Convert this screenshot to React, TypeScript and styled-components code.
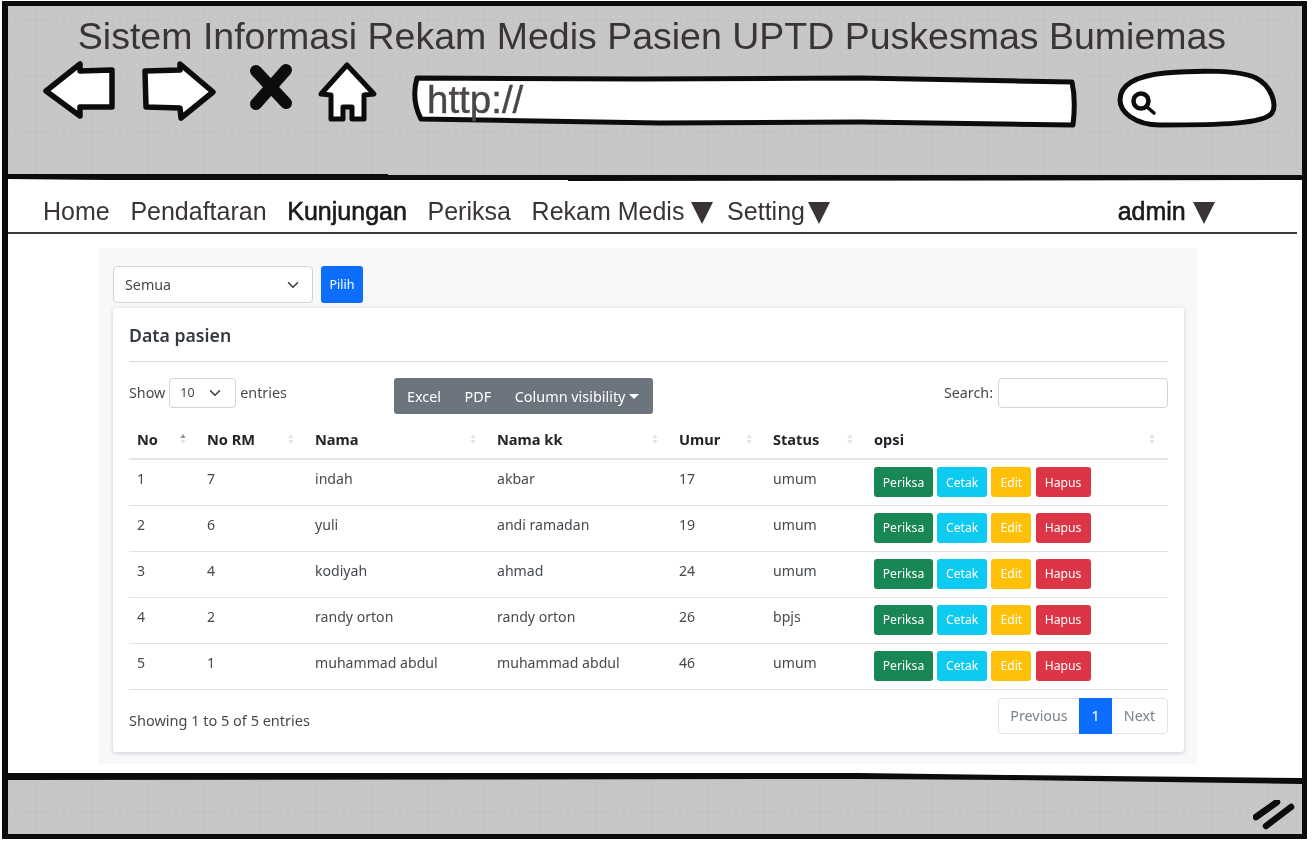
import styled, { createGlobalStyle } from 'styled-components'

const GlobalStyle = createGlobalStyle`
  html, body {
    margin: 0;
    padding: 0;
    background: #fff;
  }
  * {
    box-sizing: border-box;
  }
`

const barGray = '#c6c6c6'

const sketchGray = `
  background-color: ${barGray};
  background-image: radial-gradient(circle, #cbcbcb 1px, transparent 1.4px);
  background-size: 7px 7px;
`

const uiFont = `"Noto Sans", "Open Sans", sans-serif`
const sketchFont = `"Liberation Sans", Arial, sans-serif`

const Frame = styled.div`
  width: 1305px;
  height: 838px;
  margin: 1px 0 0 2px;
  border: 5px solid #0c0c0c;
  border-left-width: 6px;
  display: flex;
  flex-direction: column;
  background: #fff;
  overflow: hidden;
  filter: blur(0.4px);
`

const BrowserBar = styled.header`
  ${sketchGray}
  height: 167px;
  flex: none;
`

const Title = styled.h1`
  margin: 0;
  padding: 12px 6px 0 0;
  height: 52px;
  font-family: ${sketchFont};
  font-size: 37.5px;
  line-height: 36px;
  font-weight: 400;
  color: #3a3534;
  text-align: center;
  white-space: nowrap;
`

const Toolbar = styled.div`
  display: flex;
  align-items: flex-start;
  padding-left: 33px;
`

const ToolIcon = styled.svg<{ $ml?: number }>`
  flex: none;
  height: 72px;
  margin-left: ${({ $ml }) => $ml ?? 0}px;
`

const UrlBar = styled.div`
  position: relative;
  flex: none;
  width: 672px;
  height: 72px;
  margin-left: 30px;
`

const UrlShape = styled.svg`
  position: absolute;
  inset: 0;
  width: 100%;
  height: 100%;
`

const UrlText = styled.span`
  position: absolute;
  left: 17px;
  top: 21px;
  font-family: ${sketchFont};
  font-size: 38.5px;
  line-height: 42px;
  color: #4a4644;
  -webkit-text-stroke: 0.4px #4a4644;
`

const SketchLine = styled.svg<{ $height: number; $above: string; $below: string; $mt?: number }>`
  display: block;
  flex: none;
  width: 100%;
  height: ${({ $height }) => $height}px;
  margin-top: ${({ $mt }) => $mt ?? 0}px;
  background: linear-gradient(
    ${({ $above }) => $above} 50%,
    ${({ $below }) => $below} 50%
  );
`

const Nav = styled.nav`
  flex: none;
  height: 52px;
  margin-right: 5px;
  padding: 14px 0 0 35px;
  border-bottom: 2px solid #3f3b3a;
  display: flex;
  align-items: flex-start;
  gap: 20.7px;
  font-family: ${sketchFont};
  font-size: 25px;
  line-height: 30px;
  color: #3a3534;
`

const NavItem = styled.span<{ $active?: boolean }>`
  display: flex;
  align-items: center;
  white-space: nowrap;
  ${({ $active }) => $active && '-webkit-text-stroke: 0.6px #1c1a1a; color: #1c1a1a;'}
`

const AdminItem = styled(NavItem)`
  margin-left: 267px;
`

const Caret = styled.i<{ $gap: number; $trail?: number }>`
  display: block;
  width: 0;
  height: 0;
  margin: 3px ${({ $trail }) => $trail ?? 0}px 0 ${({ $gap }) => $gap}px;
  border-left: 11px solid transparent;
  border-right: 11px solid transparent;
  border-top: 22px solid #3a3534;
`

const Panel = styled.main`
  flex: none;
  width: 1099px;
  height: 516px;
  margin: 14px 0 0 90px;
  padding: 18px 12px 0 15px;
  background: #f7f8fa;
  font-family: ${uiFont};
  font-size: 14.3px;
  color: #212529;
`

const FilterRow = styled.form`
  display: flex;
  gap: 8px;
  height: 37px;
`

const SelectBox = styled.div`
  width: 200px;
  display: flex;
  align-items: center;
  justify-content: space-between;
  padding: 0 13px 0 11px;
  background: #fff;
  border: 1px solid #ced4da;
  border-radius: 4px;
  font-size: 14.3px;
  color: #454a4f;
`

const Chevron = styled.svg`
  flex: none;
  width: 12px;
  height: 12px;
`

const PrimaryButton = styled.button`
  width: 42px;
  padding: 0;
  border: 0;
  border-radius: 3px;
  background: #0d6efd;
  color: #fff;
  font-family: ${uiFont};
  font-size: 12.5px;
`

const Card = styled.section`
  width: 1071px;
  height: 444px;
  margin-top: 5px;
  padding: 0 16px;
  background: #fff;
  border-radius: 3px;
  box-shadow: 0 1px 4px rgba(40, 50, 60, 0.22);
`

const CardTitle = styled.h2`
  margin: 0;
  height: 54px;
  padding-top: 14px;
  font-size: 17.7px;
  line-height: 26px;
  font-weight: 600;
  color: #343a40;
  border-bottom: 1px solid #d8dadc;
`

const ControlRow = styled.div`
  display: flex;
  align-items: flex-start;
  margin-top: 16px;
  height: 44px;
  font-size: 14.3px;
  color: #454a4f;
`

const LengthControl = styled.label`
  width: 265px;
  display: flex;
  align-items: center;
  height: 30px;
  gap: 4px;
  line-height: 28px;
`

const LengthSelect = styled.div`
  width: 67px;
  height: 30px;
  display: flex;
  align-items: center;
  justify-content: space-between;
  padding: 0 14px 0 10px;
  border: 1px solid #ced4da;
  border-radius: 4px;
  font-size: 12.5px;
`

const ButtonGroup = styled.div`
  width: 259px;
  height: 36px;
  display: flex;
  align-items: center;
  padding-left: 13px;
  gap: 23.5px;
  background: #6c757d;
  border-radius: 3px;
  color: #fff;
  font-size: 14.4px;
`

const DropdownLabel = styled.span`
  display: flex;
  align-items: center;
  gap: 4px;
  &::after {
    content: '';
    border-left: 5px solid transparent;
    border-right: 5px solid transparent;
    border-top: 5px solid #fff;
  }
`

const SearchControl = styled.label`
  margin-left: auto;
  height: 30px;
  display: flex;
  align-items: flex-start;
  gap: 5px;
  line-height: 29px;
`

const SearchInput = styled.input`
  width: 170px;
  height: 30px;
  border: 1px solid #ced4da;
  border-radius: 4px;
  background: #fff;
`

const Table = styled.table`
  width: 1039px;
  table-layout: fixed;
  border-collapse: collapse;
  font-size: 14.1px;
  color: #454a4f;
`

const HeadCell = styled.th<{ $w: number }>`
  width: ${({ $w }) => $w}px;
  height: 37px;
  padding: 0 8px 2px;
  text-align: left;
  font-size: 14.6px;
  font-weight: 700;
  color: #212529;
  border-bottom: 2px solid #e3e5e7;
`

const HeadInner = styled.div`
  display: flex;
  align-items: center;
  justify-content: space-between;
`

const SortIcon = styled.svg`
  flex: none;
  width: 6px;
  height: 12px;
  margin-right: 5px;
`

const Row = styled.tr`
  height: 46px;
  border-bottom: 1px solid #dee2e6;
`

const Cell = styled.td`
  padding: 9px 8px 0;
  vertical-align: top;
  line-height: 20px;
  white-space: nowrap;
`

const ActionCell = styled(Cell)`
  padding-top: 7px;
`

const Actions = styled.div`
  display: flex;
  gap: 4.2px;
`

const ActionButton = styled.button<{ $bg: string; $w: number }>`
  width: ${({ $w }) => $w}px;
  height: 30px;
  padding: 0;
  border: 0;
  border-radius: 3px;
  background: ${({ $bg }) => $bg};
  color: #fff;
  font-family: ${uiFont};
  font-size: 12.2px;
`

const TableFooter = styled.div`
  display: flex;
  justify-content: space-between;
  align-items: flex-start;
  margin-top: 8px;
  font-size: 14.5px;
  color: #454a4f;
`

const Summary = styled.div`
  padding-top: 12px;
  line-height: 20px;
`

const Pagination = styled.div`
  display: flex;
  height: 36px;
  border: 1px solid #dee2e6;
  border-radius: 4px;
  color: #7b838a;
  font-size: 14.3px;
`

const PageItem = styled.span<{ $w: number; $active?: boolean }>`
  width: ${({ $w }) => $w}px;
  display: flex;
  align-items: center;
  justify-content: center;
  ${({ $active }) => $active && 'margin: -1px 0; background: #0d6efd; color: #fff;'}
`

const FooterBar = styled.footer`
  ${sketchGray}
  flex: 1;
  display: flex;
  justify-content: flex-end;
  align-items: flex-start;
  padding: 16px 5px 0 0;
`

const Grip = styled.svg`
  width: 44px;
  height: 30px;
`

const columns = [
  { label: 'No', w: 70, sorted: true },
  { label: 'No RM', w: 108 },
  { label: 'Nama', w: 182 },
  { label: 'Nama kk', w: 182 },
  { label: 'Umur', w: 94 },
  { label: 'Status', w: 101 },
  { label: 'opsi', w: 302 },
]

const patients = [
  { no: 1, rm: 7, nama: 'indah', kk: 'akbar', umur: 17, status: 'umum' },
  { no: 2, rm: 6, nama: 'yuli', kk: 'andi ramadan', umur: 19, status: 'umum' },
  { no: 3, rm: 4, nama: 'kodiyah', kk: 'ahmad', umur: 24, status: 'umum' },
  { no: 4, rm: 2, nama: 'randy orton', kk: 'randy orton', umur: 26, status: 'bpjs' },
  { no: 5, rm: 1, nama: 'muhammad abdul', kk: 'muhammad abdul', umur: 46, status: 'umum' },
]

const actions = [
  { label: 'Periksa', bg: '#198754', w: 59 },
  { label: 'Cetak', bg: '#0dcaf0', w: 50 },
  { label: 'Edit', bg: '#ffc107', w: 40 },
  { label: 'Hapus', bg: '#dc3545', w: 55 },
]

const SortArrows = ({ active }: { active?: boolean }) => (
  <SortIcon viewBox='0 0 6 12'>
    <path d='M3 1 L5.5 5 L.5 5 Z' fill={active ? '#8d9296' : '#e2e4e6'} />
    <path d='M3 11 L5.5 7 L.5 7 Z' fill='#e2e4e6' />
  </SortIcon>
)

const SelectChevron = () => (
  <Chevron viewBox='0 0 16 16'>
    <path d='M2 5 L8 11 L14 5' fill='none' stroke='#343a40' strokeWidth='2' strokeLinecap='round' strokeLinejoin='round' />
  </Chevron>
)

const App = () => {
  return (
    <Frame>
      <GlobalStyle />
      <BrowserBar>
        <Title>Sistem Informasi Rekam Medis Pasien UPTD Puskesmas Bumiemas</Title>
        <Toolbar>
          <ToolIcon viewBox='41 58 76 72' width='76'>
            <path d='M46 91 L80 64 L80 71 L112 70 L112 107 L80 107 L80 116 Z' fill='#fff' stroke='#0c0c0c' strokeWidth='5.5' strokeLinejoin='round' />
          </ToolIcon>
          <ToolIcon viewBox='141 58 78 72' width='78' $ml={24}>
            <path d='M145 71 L180 70 L180 64 L213 92 L181 118 L180 108 L146 107 Z' fill='#fff' stroke='#0c0c0c' strokeWidth='5.5' strokeLinejoin='round' />
          </ToolIcon>
          <ToolIcon viewBox='248 58 46 72' width='46' $ml={29}>
            <path d='M256 71 L286 103 M286 70 L256 104' fill='none' stroke='#0c0c0c' strokeWidth='12' strokeLinecap='round' />
          </ToolIcon>
          <ToolIcon viewBox='316 58 64 72' width='64' $ml={22}>
            <path d='M347 65 L374 94 L364 95 L364 119 L352 119 L352 107 L343 107 L343 119 L331 119 L331 95 L321 94 Z' fill='#fff' stroke='#0c0c0c' strokeWidth='5' strokeLinejoin='round' />
          </ToolIcon>
          <UrlBar>
            <UrlShape viewBox='410 58 672 72'>
              <path d='M417 78 L640 79 L860 78 L1072 82 Q1076 100 1073 125 L860 122 L660 123 L421 119 Q411 100 417 78 Z' fill='#fff' stroke='#0c0c0c' strokeWidth='5' strokeLinejoin='round' />
            </UrlShape>
            <UrlText>http://</UrlText>
          </UrlBar>
          <ToolIcon viewBox='1115 58 165 72' width='165' $ml={33}>
            <path d='M1165 73 C1200 70 1240 70 1256 78 C1272 86 1277 105 1272 113 C1264 124 1220 125 1160 125 C1135 125 1120 112 1120 100 C1120 85 1135 76 1165 73 Z' fill='#fff' stroke='#0c0c0c' strokeWidth='5' />
            <circle cx='1141' cy='101' r='7.5' fill='none' stroke='#0c0c0c' strokeWidth='4.5' />
            <path d='M1147 107 L1154 113' stroke='#0c0c0c' strokeWidth='3.5' strokeLinecap='round' />
          </ToolIcon>
        </Toolbar>
      </BrowserBar>
      <SketchLine viewBox='0 0 1294 9' preserveAspectRatio='none' $height={9} $above={barGray} $below='#fff'>
        <path d='M0 1 L380 1 L380 2 L1294 2 L1294 7 L560 8 L560 7 L100 7 L0 6 Z' fill='#0c0c0c' />
      </SketchLine>
      <Nav>
        <NavItem>Home</NavItem>
        <NavItem>Pendaftaran</NavItem>
        <NavItem $active>Kunjungan</NavItem>
        <NavItem>Periksa</NavItem>
        <NavItem>
          Rekam Medis
          <Caret $gap={7} $trail={-7} />
        </NavItem>
        <NavItem>
          Setting
          <Caret $gap={3} />
        </NavItem>
        <AdminItem $active>
          admin
          <Caret $gap={7} />
        </AdminItem>
      </Nav>
      <Panel>
        <FilterRow>
          <SelectBox>
            Semua
            <SelectChevron />
          </SelectBox>
          <PrimaryButton type='button'>Pilih</PrimaryButton>
        </FilterRow>
        <Card>
          <CardTitle>Data pasien</CardTitle>
          <ControlRow>
            <LengthControl>
              Show
              <LengthSelect>
                10
                <SelectChevron />
              </LengthSelect>
              entries
            </LengthControl>
            <ButtonGroup>
              <span>Excel</span>
              <span>PDF</span>
              <DropdownLabel>Column visibility</DropdownLabel>
            </ButtonGroup>
            <SearchControl>
              Search:
              <SearchInput />
            </SearchControl>
          </ControlRow>
          <Table>
            <thead>
              <tr>
                {columns.map((col) => (
                  <HeadCell key={col.label} $w={col.w}>
                    <HeadInner>
                      {col.label}
                      <SortArrows active={col.sorted} />
                    </HeadInner>
                  </HeadCell>
                ))}
              </tr>
            </thead>
            <tbody>
              {patients.map((p) => (
                <Row key={p.no}>
                  <Cell>{p.no}</Cell>
                  <Cell>{p.rm}</Cell>
                  <Cell>{p.nama}</Cell>
                  <Cell>{p.kk}</Cell>
                  <Cell>{p.umur}</Cell>
                  <Cell>{p.status}</Cell>
                  <ActionCell>
                    <Actions>
                      {actions.map((a) => (
                        <ActionButton key={a.label} type='button' $bg={a.bg} $w={a.w}>
                          {a.label}
                        </ActionButton>
                      ))}
                    </Actions>
                  </ActionCell>
                </Row>
              ))}
            </tbody>
          </Table>
          <TableFooter>
            <Summary>Showing 1 to 5 of 5 entries</Summary>
            <Pagination>
              <PageItem $w={80}>Previous</PageItem>
              <PageItem $w={33} $active>1</PageItem>
              <PageItem $w={55}>Next</PageItem>
            </Pagination>
          </TableFooter>
        </Card>
      </Panel>
      <SketchLine viewBox='0 0 1294 11' preserveAspectRatio='none' $height={11} $mt={9} $above='#fff' $below={barGray}>
        <path d='M0 0 L850 0 L1000 2 L1294 5 L1294 11 L1000 7 L850 6 L0 7 Z' fill='#0c0c0c' />
      </SketchLine>
      <FooterBar>
        <Grip viewBox='0 0 44 30'>
          <path d='M3 17 L24 2 M13 26 L38 7' fill='none' stroke='#0c0c0c' strokeWidth='6.5' strokeLinecap='round' />
        </Grip>
      </FooterBar>
    </Frame>
  )
}

export default App
